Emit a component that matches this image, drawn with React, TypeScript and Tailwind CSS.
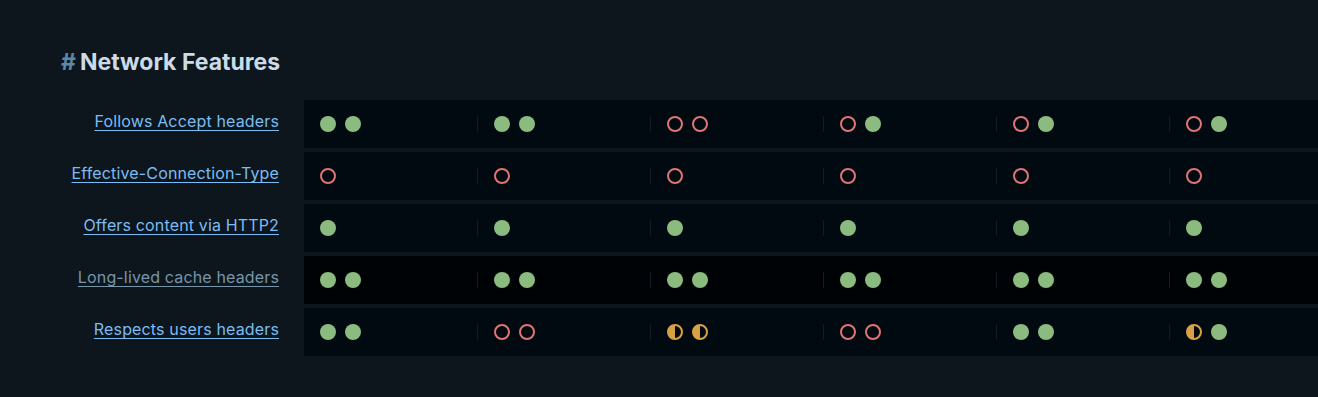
import React from "react";

type Mark = "yes" | "no" | "partial";

const features: { name: string; muted?: boolean; cells: Mark[][] }[] = [
  {
    name: "Follows Accept headers",
    cells: [
      ["yes", "yes"],
      ["yes", "yes"],
      ["no", "no"],
      ["no", "yes"],
      ["no", "yes"],
      ["no", "yes"],
    ],
  },
  {
    name: "Effective-Connection-Type",
    cells: [["no"], ["no"], ["no"], ["no"], ["no"], ["no"]],
  },
  {
    name: "Offers content via HTTP2",
    cells: [["yes"], ["yes"], ["yes"], ["yes"], ["yes"], ["yes"]],
  },
  {
    name: "Long-lived cache headers",
    muted: true,
    cells: [
      ["yes", "yes"],
      ["yes", "yes"],
      ["yes", "yes"],
      ["yes", "yes"],
      ["yes", "yes"],
      ["yes", "yes"],
    ],
  },
  {
    name: "Respects users headers",
    cells: [
      ["yes", "yes"],
      ["no", "no"],
      ["partial", "partial"],
      ["no", "no"],
      ["yes", "yes"],
      ["partial", "yes"],
    ],
  },
];

const Dot: React.FC<{ mark: Mark }> = ({ mark }) => {
  if (mark === "yes") {
    return <span className="block w-4 h-4 rounded-full bg-[#8cbb80]" />;
  }
  if (mark === "no") {
    return (
      <span className="block w-4 h-4 rounded-full border-2 border-[#e07474]" />
    );
  }
  // half filled, left side
  return (
    <span className="block w-4 h-4 rounded-full border-2 border-[#d9a146] bg-[linear-gradient(90deg,#d9a146_50%,transparent_50%)]" />
  );
};

export default function App() {
  return (
    <div
      className="min-h-[397px] w-full overflow-hidden bg-[#0d161d] pt-[47px] pl-[61px]"
      style={{ fontFamily: "Inter, 'Liberation Sans', sans-serif" }}
    >
      <h2 className="text-[23px] font-bold leading-[30px] text-[#cbdbe8]">
        <span className="text-[#5d86ab] mr-1">#</span>Network Features
      </h2>

      <div className="mt-[23px] flex flex-col gap-1">
        {features.map((f) => (
          <div key={f.name} className="flex items-center">
            <div className="w-[218px] shrink-0 text-right pb-[6px]">
              <a
                href="#"
                className={`text-base tracking-[0.15px] underline underline-offset-[3px] ${
                  f.muted ? "text-[#7895aa]" : "text-[#7cbcf2]"
                }`}
              >
                {f.name}
              </a>
            </div>
            <div
              className={`ml-[25px] flex h-12 shrink-0 items-center ${
                f.muted ? "bg-[#000305]" : "bg-[#020a11]"
              }`}
            >
              {f.cells.map((cell, i) => (
                <div
                  key={i}
                  className={`flex h-4 w-[173px] shrink-0 items-center gap-[9px] pl-4 ${
                    i > 0 ? "border-l border-[#111c25]" : ""
                  }`}
                >
                  {cell.map((m, j) => (
                    <Dot key={j} mark={m} />
                  ))}
                </div>
              ))}
            </div>
          </div>
        ))}
      </div>
    </div>
  );
}
